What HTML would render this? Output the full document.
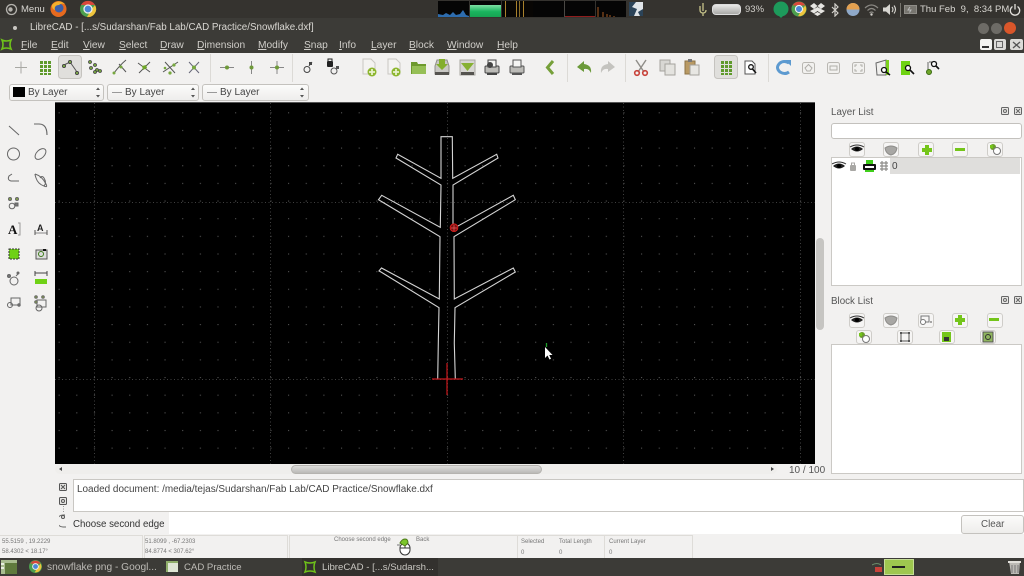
<!DOCTYPE html>
<html><head><meta charset="utf-8"><title>LibreCAD</title>
<style>
html,body{margin:0;padding:0;background:#f2f1f0}
body{width:1024px;height:576px;overflow:hidden;position:relative;background:#f2f1f0;font-family:"Liberation Sans",sans-serif;font-size:10px;color:#3c3c3c;filter:blur(.35px)}
div,span,svg{position:absolute}
.t{white-space:pre;line-height:1}
.menu{top:41px;color:#d0cec9;font-size:10.2px}
.menu u{text-decoration-thickness:1px;text-underline-offset:1px}
.combo{top:84px;height:15px;background:linear-gradient(#fbfbfa,#eeedec);border:1px solid #c4c2be;border-radius:3px;box-sizing:content-box}
.sm{font-size:6px;color:#777}
.pbtn{width:14px;height:13px;background:#f6f5f4;border:1px solid #cfcdc9;border-radius:3px}
</style></head><body>

<!-- top panel -->
<div style="left:0;top:0;width:1024px;height:18px;background:#35332f"></div>
<div style="left:0;top:18px;width:1024px;height:35px;background:#3c3b37"></div>
<svg style="left:5px;top:3px" width="13" height="13" viewBox="0 0 13 13"><circle cx="6.500" cy="6.500" r="5" fill="none" stroke="#b5b3ae" stroke-width="1.300"/><circle cx="5.500" cy="6.500" r="2.200" fill="#b5b3ae"/></svg>
<div class="t" style="left:21px;top:5px;color:#d8d6d1;font-size:9.500px">Menu</div>
<svg style="left:49px;top:0" width="19" height="18" viewBox="0 0 19 18"><circle cx="9.500" cy="9" r="8" fill="#e66a1f"/><circle cx="10" cy="8" r="4.500" fill="#3c5fa8"/><path d="M3 5C6 1 12 0 16 4 13 3 11 4 10 5 7 5 5 7 6 10 3 9 3 7 3 5Z" fill="#f4b02c"/></svg>
<svg style="left:79px;top:0" width="18" height="18" viewBox="0 0 18 18"><circle cx="9" cy="9" r="8" fill="#4c9f4e"/><path d="M2 5A8 8 0 0 1 16 5H9Z" fill="#d9473b"/><path d="M16 5A8 8 0 0 1 8 17L12 10Z" fill="#eec43d"/><circle cx="9" cy="9" r="4" fill="#4b86d6" stroke="#eee" stroke-width="1.300"/></svg>

<!-- system monitor -->
<div style="left:438px;top:1px;width:31px;height:16px;background:#050505"></div>
<svg style="left:438px;top:1px" width="31" height="16"><path d="M0 16V13L5 14 8 12 12 14 15 11 18 14 22 13 25 9 28 14 31 15V16Z" fill="#2d6cae"/></svg>
<div style="left:470px;top:1px;width:31px;height:16px;background:#050505"></div>
<div style="left:470px;top:5px;width:31px;height:12px;background:linear-gradient(#7ee0a3,#19b45e 55%,#17a453)"></div>
<div style="left:502px;top:1px;width:31px;height:16px;background:#080604"></div>
<div style="left:505px;top:1px;width:1px;height:16px;background:#a9812c"></div>
<div style="left:516px;top:1px;width:1px;height:16px;background:#a9812c"></div>
<div style="left:519px;top:1px;width:1px;height:16px;background:#8c6f2a"></div>
<div style="left:523px;top:1px;width:1px;height:16px;background:#a9812c"></div>
<div style="left:533px;top:1px;width:31px;height:16px;background:#050505"></div>
<div style="left:564px;top:1px;width:1px;height:16px;background:#4a4844"></div>
<div style="left:565px;top:1px;width:30px;height:16px;background:#050505"></div>
<div style="left:565px;top:16px;width:30px;height:1px;background:#8f1d1d"></div>
<div style="left:596px;top:1px;width:30px;height:16px;background:#050505"></div>
<svg style="left:596px;top:1px" width="30" height="16"><path d="M2 16V6M7 16V11M11 16V13M14 16V14M18 16V15" stroke="#a85b22" stroke-width="1"/></svg>
<svg style="left:629px;top:2px" width="14" height="14"><rect width="14" height="14" fill="#dfe4e8"/><path d="M0 0H7L3 5 8 7 5 14H0ZM14 7L9 10 11 14H14Z" fill="#2b4358"/></svg>

<!-- indicators -->
<svg style="left:697px;top:2px" width="12" height="15"><path d="M6 1V9M3 4V8Q3 11 6 11 9 11 9 8M6 11V14" stroke="#c7c48a" stroke-width="1.300" fill="none"/></svg>
<div style="left:712px;top:4px;width:29px;height:11px;border-radius:4px;background:linear-gradient(#e8e8e6,#a9a9a6);border:1px solid #ddd;box-sizing:border-box"></div>
<div class="t" style="left:745px;top:5px;color:#d2d0cb;font-size:9.500px">93%</div>
<svg style="left:773px;top:1px" width="16" height="17"><circle cx="8" cy="8" r="7.500" fill="#1d9a5b"/><path d="M5 14L8 17 11 14Z" fill="#1d9a5b"/></svg>
<svg style="left:791px;top:1px" width="16" height="16" viewBox="0 0 18 18"><circle cx="9" cy="9" r="8.500" fill="#4c9f4e"/><path d="M2 5A8 8 0 0 1 16 5H9Z" fill="#d9473b"/><path d="M16 5A8 8 0 0 1 8 17L12 10Z" fill="#eec43d"/><circle cx="9" cy="9" r="4" fill="#4b86d6" stroke="#eee" stroke-width="1.300"/></svg>
<svg style="left:810px;top:3px" width="15" height="13"><path d="M4 0L7.500 3 4 6 0 3ZM11 0L15 3 11 6 7.500 3ZM4 6L7.500 4 11 6 15 8 11 10.500 7.500 8 4 10.500 0 8Z M4 11L7.500 9 11 11 7.500 13Z" fill="#e6e5e1"/></svg>
<svg style="left:830px;top:3px" width="10" height="14"><path d="M2 4L8 10 5 13V1L8 4 2 10" fill="none" stroke="#d2d0cb" stroke-width="1.200"/></svg>
<svg style="left:846px;top:2px" width="14" height="15"><circle cx="7" cy="7.500" r="6.500" fill="#8fa9c9"/><path d="M.5 7.500A6.500 6.500 0 0 1 13.500 7.500Z" fill="#e3a04f"/></svg>
<svg style="left:864px;top:3px" width="15" height="13"><path d="M1 5Q7.500 -1 14 5M3.500 7.500Q7.500 3.500 11.500 7.500M5.500 10Q7.500 8 9.500 10" fill="none" stroke="#8a8883" stroke-width="1.200"/><circle cx="7.500" cy="11.500" r="1.200" fill="#d2d0cb"/></svg>
<svg style="left:882px;top:3px" width="16" height="13"><path d="M1 4.500H4L8 1V12L4 8.500H1Z" fill="#d8d6d1"/><path d="M10 4Q12 6.500 10 9M12 2.500Q15 6.500 12 10.500" fill="none" stroke="#d8d6d1" stroke-width="1.100"/></svg>
<div style="left:900px;top:3px;width:1px;height:14px;background:#77756f"></div>
<svg style="left:904px;top:5px" width="14" height="9"><rect x=".5" y=".5" width="12" height="8" fill="#77756f" stroke="#8f8d88"/><path d="M6 2L4 5H7L5.500 7.500" stroke="#bbb" fill="none"/></svg>
<div class="t" style="left:920px;top:5px;color:#d8d6d1;font-size:9.500px">Thu Feb  9,  8:34 PM</div>
<svg style="left:1009px;top:3px" width="12" height="13"><path d="M3.500 3.500A4.700 4.700 0 1 0 8.500 3.500M6 1V6.500" fill="none" stroke="#e2e0db" stroke-width="1.300"/></svg>

<!-- title bar -->
<div style="left:13px;top:26px;width:4px;height:4px;border-radius:50%;background:#c9c7c2"></div>
<div class="t" style="left:30px;top:23px;color:#d9d7d2;font-size:9.800px">LibreCAD - [...s/Sudarshan/Fab Lab/CAD Practice/Snowflake.dxf]</div>
<div style="left:978px;top:23px;width:11px;height:11px;border-radius:50%;background:#6d6b66"></div>
<div style="left:991px;top:23px;width:11px;height:11px;border-radius:50%;background:#6d6b66"></div>
<div style="left:1004px;top:22px;width:12px;height:12px;border-radius:50%;background:#d9562a"></div>

<!-- menu bar -->
<svg style="left:0;top:37px" width="13" height="15"><path d="M2 3Q6 5 11 3 9 7.500 11 12 6 10 2 12 4 7.500 2 3Z" fill="none" stroke="#6fc21a" stroke-width="1.600"/></svg>
<div class="t menu" style="left:21px"><u>F</u>ile</div>
<div class="t menu" style="left:51px"><u>E</u>dit</div>
<div class="t menu" style="left:83px"><u>V</u>iew</div>
<div class="t menu" style="left:119px"><u>S</u>elect</div>
<div class="t menu" style="left:160px"><u>D</u>raw</div>
<div class="t menu" style="left:197px"><u>D</u>imension</div>
<div class="t menu" style="left:258px"><u>M</u>odify</div>
<div class="t menu" style="left:304px"><u>S</u>nap</div>
<div class="t menu" style="left:339px"><u>I</u>nfo</div>
<div class="t menu" style="left:371px"><u>L</u>ayer</div>
<div class="t menu" style="left:409px"><u>B</u>lock</div>
<div class="t menu" style="left:447px"><u>W</u>indow</div>
<div class="t menu" style="left:497px"><u>H</u>elp</div>
<div style="left:980px;top:39px;width:12px;height:11px;background:#f3f3f1;border-radius:2px"></div>
<div style="left:982px;top:46px;width:7px;height:2px;background:#333"></div>
<div style="left:994px;top:39px;width:12px;height:11px;background:#dcdbd8;border-radius:2px"></div>
<svg style="left:996px;top:41px" width="8" height="7"><rect x=".5" y=".5" width="6" height="6" fill="none" stroke="#666"/></svg>
<div style="left:1010px;top:39px;width:13px;height:11px;background:#dcdbd8;border-radius:2px"></div>
<svg style="left:1012px;top:41px" width="9" height="8"><path d="M1 1L8 7M8 1L1 7" stroke="#555" stroke-width="1.300"/></svg>

<!-- toolbar row 1 -->
<svg style="left:0;top:53px" width="1024" height="30" viewBox="0 53 1024 30" fill="none">
<rect x="58.500" y="55.500" width="23" height="23" rx="3" fill="#e0dfdc" stroke="#c5c3bf"/>
<rect x="714.500" y="55.500" width="23" height="23" rx="3" fill="#e0dfdc" stroke="#c5c3bf"/>
<path d="M15 67.500H27M21 61.500V73.500" stroke="#a8a8a3"/>
<g fill="#5f9a2b"><path d="M40 61h3v3h-3zM44 61h3v3h-3zM48 61h3v3h-3zM40 65h3v3h-3zM44 65h3v3h-3zM48 65h3v3h-3zM40 69h3v3h-3zM44 69h3v3h-3zM48 69h3v3h-3zM40 73h3v2h-3zM44 73h3v2h-3zM48 73h3v2h-3z"/></g>
<path d="M64 65L70 62 77 72" stroke="#555"/><g fill="#8bc34a" stroke="#444"><circle cx="64" cy="66" r="1.500"/><circle cx="70" cy="62" r="1.500"/><circle cx="77" cy="73" r="1.500"/></g>
<g fill="#77a83f" stroke="#444" stroke-width=".8"><circle cx="90" cy="62" r="1.500"/><circle cx="95" cy="65" r="1.500"/><circle cx="91" cy="68" r="1.500"/><circle cx="97" cy="70" r="1.500"/><circle cx="100" cy="71" r="1.500"/><circle cx="95" cy="72" r="1.500"/></g>
<path d="M114 73Q120 65 126 60M119 64L126 72" stroke="#555"/><circle cx="114" cy="73" r="1.500" fill="#77a83f"/><circle cx="121" cy="67" r="1.500" fill="#77a83f"/>
<path d="M138 63L150 72M150 62L139 73" stroke="#555"/><path d="M142 66l4-1 1 3-4 2z" fill="#6fa62a"/>
<path d="M163 72L178 62M165 62L175 73" stroke="#555"/><circle cx="170" cy="73" r="1.600" fill="#77a83f"/><circle cx="174" cy="65" r="1.600" fill="#77a83f"/><circle cx="165" cy="68" r="1.300" fill="#77a83f"/>
<path d="M189 62L199 73M199 62L189 73" stroke="#667"/><circle cx="194" cy="67.500" r="2" fill="#77a83f"/>
<path d="M210.500 54V82M292.500 54V82" stroke="#dcdad6"/>
<path d="M220 67.500H234" stroke="#888"/><circle cx="227" cy="67.500" r="2" fill="#6f9a3a"/>
<path d="M251.500 61V74" stroke="#888"/><circle cx="251.500" cy="67.500" r="2" fill="#6f9a3a"/>
<path d="M270 67.500H284M277 61V74" stroke="#888"/><circle cx="277" cy="67.500" r="2" fill="#6f9a3a"/>
<circle cx="307" cy="69.500" r="3" stroke="#444"/><path d="M309 66L312 62" stroke="#444"/><rect x="309" y="62" width="3" height="3" fill="#444"/>
<rect x="327" y="61" width="6" height="6" rx="1" fill="#222"/><path d="M328 61V59h4v2" stroke="#222"/><circle cx="334" cy="71" r="3" stroke="#555"/><rect x="336" y="66" width="3" height="3" fill="#555"/>
<path d="M363 59H371L375 63V74H363Z" fill="#f4f3f1" stroke="#c9c7c2"/><circle cx="372" cy="72" r="4.500" fill="#8db62f"/><path d="M369 72H375M372 69V75" stroke="#e8f2cc" stroke-width="1.800"/>
<path d="M388 59H396L400 63V74H388Z" fill="#f4f3f1" stroke="#c9c7c2"/><circle cx="396" cy="72" r="4.500" fill="#8db62f"/><path d="M393 72H399M396 69V75" stroke="#e8f2cc" stroke-width="1.800"/>
<path d="M411 62H417L418 64H426V74H411Z" fill="#6e9a2e"/><path d="M412 66H426V74H412Z" fill="#96bf56"/>
<path d="M435 66L437 60H447L449 66V74H435Z" fill="#c9c8c4" stroke="#8f8d88"/><path d="M435 72H449V75H435Z" fill="#55534f"/><path d="M439 59H445V64H448L442 70 436 64H439Z" fill="#83ae2c"/>
<rect x="460" y="60" width="15" height="15" fill="#d7d6d2" stroke="#a8a6a1"/><path d="M461 72H474V75H461Z" fill="#55534f"/><path d="M461 63H474L467.500 71Z" fill="#86b032"/>
<rect x="485" y="66" width="14" height="7" rx="1" fill="#bcbbb7" stroke="#444"/><rect x="488" y="60" width="8" height="7" fill="#f5f5f3" stroke="#444"/><circle cx="490" cy="65" r="3" fill="#444"/><rect x="487" y="73" width="10" height="2" fill="#444"/>
<rect x="510" y="66" width="14" height="7" rx="1" fill="#bcbbb7" stroke="#555"/><rect x="513" y="60" width="8" height="7" fill="#f5f5f3" stroke="#555"/><rect x="512" y="73" width="10" height="2" fill="#555"/>
<path d="M553 61L547.500 67.500 553 74" stroke="#76a03a" stroke-width="3"/>
<path d="M567.500 54V82M625.500 54V82M768.500 54V82" stroke="#dcdad6"/>
<path d="M584 61L577 67 584 72V69Q589 68 591 73 592 65 584 64Z" fill="#6b9a3a"/>
<path d="M608 61L615 67 608 72V69Q603 68 601 73 600 65 608 64Z" fill="#c4c3bf"/>
<path d="M636 60L644 72M646 60L638 72" stroke="#8f8d88" stroke-width="1.400"/><circle cx="637" cy="73" r="2.300" stroke="#c8423a" stroke-width="1.600"/><circle cx="645" cy="73" r="2.300" stroke="#c8423a" stroke-width="1.600"/>
<rect x="660" y="60" width="10" height="11" fill="#d8d7d3" stroke="#a5a39e"/><rect x="665" y="64" width="10" height="11" fill="#e4e3df" stroke="#a5a39e"/>
<rect x="685" y="61" width="10" height="13" fill="#b99a64" stroke="#8d7446"/><rect x="690" y="65" width="9" height="10" fill="#e8e7e3" stroke="#a5a39e"/><rect x="688" y="59" width="4" height="3" fill="#777"/>
<g fill="#5f9a2b"><path d="M721 61h3v3h-3zM725 61h3v3h-3zM729 61h3v3h-3zM721 65h3v3h-3zM725 65h3v3h-3zM729 65h3v3h-3zM721 69h3v3h-3zM725 69h3v3h-3zM729 69h3v3h-3zM721 73h3v2h-3zM725 73h3v2h-3zM729 73h3v2h-3z"/></g>
<path d="M745 61H752L755 64V74H745Z" fill="#fff" stroke="#555"/><circle cx="751" cy="67" r="2.300" stroke="#111" stroke-width="1.300"/><path d="M752.500 69L756 73" stroke="#111" stroke-width="1.600"/>
<path d="M789 63Q784 60 780 63 775 67.500 780 72 785 75 789 72" stroke="#5d9ad0" stroke-width="3"/><path d="M785 60H791V66Z" fill="#5d9ad0"/>
<rect x="802.500" y="62.500" width="12" height="11" rx="2" fill="#f2f1ef" stroke="#b9b7b2"/><path d="M805 68L808.500 64.500 812 68 810 71H807Z" stroke="#b0aeaa"/>
<rect x="827.500" y="62.500" width="12" height="11" rx="2" fill="#f2f1ef" stroke="#b9b7b2"/><rect x="830" y="66" width="7" height="4" stroke="#b0aeaa"/>
<rect x="852.500" y="62.500" width="12" height="11" rx="2" fill="#f2f1ef" stroke="#b9b7b2"/><path d="M855 67V65H857M860 65H862V67M862 69V71H860M857 71H855V69" stroke="#b0aeaa"/>
<path d="M876 63L886 60V75H877Z" fill="#f0efed" stroke="#666"/><path d="M886 60H889V75H886Z" fill="#7bd11d"/><circle cx="884" cy="70" r="2.500" fill="#fff" stroke="#111" stroke-width="1.300"/><path d="M886 72L890 75" stroke="#111" stroke-width="1.600"/>
<rect x="901" y="61" width="9" height="14" fill="#6fd312"/><circle cx="908" cy="68" r="2.500" fill="#fff" stroke="#111" stroke-width="1.300"/><path d="M910 70L914 74" stroke="#111" stroke-width="1.600"/>
<path d="M929 62H936V66M928 62V70" stroke="#666"/><circle cx="929" cy="72" r="2.500" fill="#6fa62a" stroke="#3a6a10"/><circle cx="934" cy="64" r="2.500" fill="#fff" stroke="#111" stroke-width="1.300"/><path d="M936 66L939 69" stroke="#111" stroke-width="1.600"/>
</svg>

<!-- combos row -->
<div class="combo" style="left:9px;width:93px"></div>
<div style="left:13px;top:87px;width:12px;height:10px;background:#000"></div>
<div class="t" style="left:28px;top:88px;font-size:10px;color:#444">By Layer</div>
<div class="combo" style="left:107px;width:90px"></div>
<div style="left:112px;top:92px;width:10px;height:1px;background:#999"></div>
<div class="t" style="left:125px;top:88px;font-size:10px;color:#444">By Layer</div>
<div class="combo" style="left:202px;width:105px"></div>
<div style="left:207px;top:92px;width:10px;height:1px;background:#999"></div>
<div class="t" style="left:220px;top:88px;font-size:10px;color:#444">By Layer</div>
<svg style="left:0;top:84px" width="310" height="17" fill="#555"><path d="M96 6L98 3.500 100 6ZM96 11L98 13.500 100 11ZM191 6L193 3.500 195 6ZM191 11L193 13.500 195 11ZM300 6L302 3.500 304 6ZM300 11L302 13.500 304 11Z"/></svg>

<!-- canvas -->
<div style="left:55px;top:102px;width:760px;height:362px;background:#000;border-top:1px solid #555;box-sizing:border-box"></div>
<svg style="left:55px;top:103px" width="760" height="361" viewBox="55 103 760 361">
<defs><pattern id="dots" x="5.650" y="6.350" width="17.650" height="17.650" patternUnits="userSpaceOnUse"><rect width="1.100" height="1.100" fill="#555"/></pattern></defs>
<rect x="55" y="103" width="760" height="361" fill="url(#dots)"/>
<path d="M94.500 103V464M270.500 103V464M447.500 103V464M623.500 103V464M800.500 103V464M55 202.500H815M55 379.500H815" stroke="#404040" stroke-width="1" stroke-dasharray="1 2.500"/>
<g fill="none" stroke="#d4d4d4" stroke-width="1.100">
<path d="M437.700 379L438.300 343.300 439 307.700 381 272 379 271 381.500 268 439.300 299 440 236.700 378.500 199.700 381.700 195.300 440.300 227.300 441 185 396 158 397.700 154.300 441 178.300V136.700H452.300L452.700 178.300 496.700 154.300 498 158 453 185V225"/>
<path d="M456.700 226.700L513.300 195.300 515.300 199.700 454 236.700 454.300 299 513.300 268 515.300 272 455 307.700 454.300 343.300 455.300 379"/>
</g>
<circle cx="454" cy="227.700" r="3.800" fill="#7a1010" stroke="#d81e1e"/><path d="M451 228H457M454 225V231" stroke="#f06060" stroke-width=".7"/>
<path d="M432 379H463M447 363V395" stroke="#c9181c" stroke-width="1.200"/>
<path d="M546.500 343V347" stroke="#1f9d2a" stroke-width="1.300"/>
<path d="M545 347V358L547.500 355.500 549.500 359.500 551 358.800 549.200 355H552.500Z" fill="#fff"/>
</svg>

<!-- canvas scrollbars -->
<div style="left:815px;top:102px;width:11px;height:372px;background:#f2f1f0"></div>
<div style="left:816px;top:238px;width:8px;height:92px;background:#c6c5c2;border-radius:4px"></div>
<div style="left:55px;top:464px;width:722px;height:10px;background:#efeeec;border-radius:5px"></div>
<div style="left:291px;top:465px;width:251px;height:9px;background:linear-gradient(#dedddb,#bbbab7);border:1px solid #b5b3af;border-radius:5px;box-sizing:border-box"></div>
<div style="left:59px;top:467px;width:0;height:0;border:2.500px solid transparent;border-right:3px solid #444;border-left:0"></div>
<div style="left:771px;top:467px;width:0;height:0;border:2.500px solid transparent;border-left:3px solid #444;border-right:0"></div>
<div class="t" style="left:789px;top:466px;font-size:10px;color:#555">10 / 100</div>

<!-- layer list -->
<div class="t" style="left:831px;top:108px;font-size:9.800px;color:#555">Layer List</div>
<svg style="left:1000px;top:107px" width="24" height="10" fill="none" stroke="#666"><rect x="1.500" y=".5" width="7" height="7" rx="1" fill="#e8e7e5"/><circle cx="5" cy="4" r="1.500"/><rect x="14.500" y=".5" width="7" height="7" rx="1" fill="#e8e7e5"/><path d="M16 2L20 6M20 2L16 6"/></svg>
<div style="left:831px;top:123px;width:189px;height:14px;background:#fff;border:1px solid #c3c1bd;border-radius:3px"></div>
<div class="pbtn" style="left:849px;top:142px"></div>
<div class="pbtn" style="left:883px;top:142px"></div>
<div class="pbtn" style="left:918px;top:142px"></div>
<div class="pbtn" style="left:952px;top:142px"></div>
<div class="pbtn" style="left:987px;top:142px"></div>
<svg style="left:830px;top:140px" width="194" height="35" viewBox="830 140 194 35">
<path d="M851 149Q857 144 863 149 857 154 851 149Z" fill="#222"/><circle cx="857" cy="149" r="2" fill="#000"/><path d="M850 147Q857 143 864 147" stroke="#333" fill="none"/>
<path d="M885 148Q891 144 897 148 896 154 891 155 886 154 885 148Z" fill="#a8a7a4" stroke="#8e8d8a"/>
<path d="M922 148h3v-3h4v3h3v4h-3v3h-4v-3h-3Z" fill="#74c51a"/>
<rect x="955" y="148" width="10" height="3" fill="#74c51a"/>
<circle cx="993" cy="147" r="3" fill="#6aa028"/><rect x="990" y="145" width="3" height="3" fill="#74c51a"/><circle cx="997" cy="151" r="3.500" fill="#fff" stroke="#777"/>
</svg>
<div style="left:831px;top:157px;width:189px;height:127px;background:#fff;border:1px solid #cbc9c5"></div>
<div style="left:890px;top:158px;width:130px;height:16px;background:#dfdedc"></div>
<svg style="left:832px;top:158px" width="60" height="16" viewBox="0 0 60 16"><path d="M1 8Q7 3 13 8 7 13 1 8Z" fill="#222"/><circle cx="7" cy="8" r="2" fill="#000"/><path d="M0 6Q7 2 14 6" stroke="#333" fill="none"/>
<rect x="18" y="7" width="6" height="6" rx="1" fill="#a8a7a4"/><path d="M19.500 7V5h3v2" stroke="#a8a7a4" fill="none"/>
<rect x="31" y="6" width="13" height="6" rx="1" fill="#111"/><rect x="34" y="2" width="7" height="4" fill="#3fce1a"/><rect x="33" y="8" width="9" height="2" fill="#fff"/><rect x="33" y="12" width="9" height="2" fill="#3fce1a"/>
<path d="M48 5h8M48 8h8M48 11h8M50 3v10M54 3v10" stroke="#8d8c89" stroke-width="1.200"/></svg>
<div class="t" style="left:892px;top:162px;font-size:10px;color:#444">0</div>

<!-- block list -->
<div class="t" style="left:831px;top:297px;font-size:9.800px;color:#555">Block List</div>
<svg style="left:1000px;top:296px" width="24" height="10" fill="none" stroke="#666"><rect x="1.500" y=".5" width="7" height="7" rx="1" fill="#e8e7e5"/><circle cx="5" cy="4" r="1.500"/><rect x="14.500" y=".5" width="7" height="7" rx="1" fill="#e8e7e5"/><path d="M16 2L20 6M20 2L16 6"/></svg>
<div class="pbtn" style="left:849px;top:313px"></div>
<div class="pbtn" style="left:883px;top:313px"></div>
<div class="pbtn" style="left:918px;top:313px"></div>
<div class="pbtn" style="left:952px;top:313px"></div>
<div class="pbtn" style="left:987px;top:313px"></div>
<div class="pbtn" style="left:856px;top:330px;height:12px"></div>
<div class="pbtn" style="left:897px;top:330px;height:12px"></div>
<div class="pbtn" style="left:939px;top:330px;height:12px"></div>
<div class="pbtn" style="left:980px;top:330px;height:12px"></div>
<svg style="left:830px;top:310px" width="194" height="36" viewBox="830 310 194 36">
<path d="M851 320Q857 315 863 320 857 325 851 320Z" fill="#222"/><circle cx="857" cy="320" r="2" fill="#000"/><path d="M850 318Q857 314 864 318" stroke="#333" fill="none"/>
<path d="M885 318Q891 314 897 318 896 324 891 325 886 324 885 318Z" fill="#a8a7a4" stroke="#8e8d8a"/>
<rect x="921" y="316" width="8" height="6" fill="none" stroke="#777"/><circle cx="923" cy="322" r="2.500" fill="#fff" stroke="#777"/><path d="M930 322h2" stroke="#555"/>
<path d="M955 318h3v-3h4v3h3v4h-3v3h-4v-3h-3Z" fill="#74c51a"/>
<rect x="989" y="318" width="10" height="3" fill="#74c51a"/>
<circle cx="862" cy="335" r="3" fill="#6aa028"/><rect x="859" y="333" width="3" height="3" fill="#74c51a"/><circle cx="866" cy="339" r="3.500" fill="#fff" stroke="#777"/>
<path d="M901 333H909V341H901Z" fill="none" stroke="#555"/><rect x="900" y="332" width="2" height="2" fill="#555"/><rect x="908" y="332" width="2" height="2" fill="#555"/><rect x="900" y="340" width="2" height="2" fill="#555"/><rect x="908" y="340" width="2" height="2" fill="#555"/>
<rect x="942" y="332" width="9" height="10" fill="#74c51a"/><rect x="944" y="337" width="5" height="4" fill="#333"/>
<rect x="983" y="332" width="10" height="10" fill="#8fb55e" stroke="#555"/><circle cx="988" cy="337" r="2.500" fill="none" stroke="#333"/>
</svg>
<div style="left:831px;top:344px;width:189px;height:128px;background:#fff;border:1px solid #cbc9c5"></div>

<!-- command area -->
<svg style="left:59px;top:483px" width="10" height="45" fill="none" stroke="#555"><rect x=".5" y=".5" width="7" height="7" rx="1" fill="#e6e5e3"/><path d="M2 2L6 6M6 2L2 6"/><rect x=".5" y="14.500" width="7" height="7" rx="1" fill="#e6e5e3"/><circle cx="4" cy="18" r="1.500"/><path d="M6 32H4A3 3 0 0 0 4 44H7" stroke="#666"/><circle cx="4" cy="34" r="1.500"/><path d="M4.500 23V30" stroke-dasharray="1 1.500" stroke="#999"/></svg>
<div style="left:73px;top:479px;width:951px;height:33px;background:#fff;border:1px solid #c9c7c3;box-sizing:border-box"></div>
<div class="t" style="left:77px;top:485px;font-size:9.950px;color:#444">Loaded document: /media/tejas/Sudarshan/Fab Lab/CAD Practice/Snowflake.dxf</div>
<div style="left:169px;top:512px;width:855px;height:22px;background:#fff"></div>
<div class="t" style="left:73px;top:520px;font-size:9.700px;color:#333">Choose second edge</div>
<div style="left:961px;top:515px;width:61px;height:17px;background:linear-gradient(#fbfbfa,#eeedeb);border:1px solid #c4c2be;border-radius:3px"></div>
<div class="t" style="left:981px;top:520px;font-size:9.800px;color:#555">Clear</div>

<!-- status bar -->
<div style="left:0;top:535px;width:142px;height:22px;border:1px solid #dedcd8;border-left:0"></div>
<div style="left:144px;top:535px;width:142px;height:22px;border:1px solid #dedcd8"></div>
<div style="left:289px;top:535px;width:227px;height:22px;border:1px solid #dedcd8"></div>
<div style="left:518px;top:535px;width:86px;height:22px;border:1px solid #dedcd8;border-left:0"></div>
<div style="left:605px;top:535px;width:87px;height:22px;border:1px solid #dedcd8;border-left:0"></div>
<div class="t sm" style="left:2px;top:539px">55.5159 , 19.2229</div>
<div class="t sm" style="left:2px;top:549px">58.4302 &lt; 18.17°</div>
<div class="t sm" style="left:145px;top:539px">51.8099 , -67.2303</div>
<div class="t sm" style="left:145px;top:549px">84.8774 &lt; 307.62°</div>
<div class="t sm" style="left:334px;top:537px">Choose second edge</div>
<svg style="left:397px;top:538px" width="14" height="18" fill="none"><rect x="3" y="5" width="10" height="12" rx="5" fill="#fff" stroke="#333"/><path d="M3 10H13M8 5V10" stroke="#333"/><path d="M3 5Q5 1 8 1 11 1 11 5L8 8Z" fill="#7bc62a" stroke="#4d7a18"/><path d="M0 7H3" stroke="#777"/></svg>
<div class="t sm" style="left:416px;top:537px">Back</div>
<div class="t sm" style="left:521px;top:539px">Selected</div>
<div class="t sm" style="left:559px;top:539px">Total Length</div>
<div class="t sm" style="left:609px;top:539px">Current Layer</div>
<div class="t sm" style="left:521px;top:550px">0</div>
<div class="t sm" style="left:559px;top:550px">0</div>
<div class="t sm" style="left:609px;top:550px">0</div>

<!-- left tool column -->
<svg style="left:0;top:103px" width="55" height="210" viewBox="0 103 55 210" fill="none" stroke="#666">
<path d="M9 126L19 135"/><path d="M34 124H39Q47 124 47 135" stroke-width="1.100"/>
<circle cx="13.500" cy="154" r="6"/><ellipse cx="40.500" cy="154" rx="6.500" ry="4" transform="rotate(-45 40.500 154)"/>
<path d="M19 181H11Q7 180 9 176L12 174"/><path d="M35 174Q42 176 46 184 48 188 44 186 38 184 36 178 35 175 35 174M40 178Q42 175 44 178 47 183 44 186"/>
<circle cx="10" cy="199" r="1.500" fill="#87a54c"/><circle cx="17" cy="199" r="1.500" fill="#87a54c"/><circle cx="12" cy="206" r="2.800"/><rect x="15" y="203" width="3" height="3" fill="#777"/>
<text x="8" y="234" font-family="Liberation Serif,serif" font-size="13" font-weight="700" fill="#111" stroke="none">A</text><path d="M18 223H20V235H18" stroke="#999"/>
<text x="37" y="231" font-family="Liberation Sans,sans-serif" font-size="9" font-weight="700" fill="#222" stroke="none">A</text><path d="M35 233H47" stroke="#888"/><path d="M35 230V235M47 230V235" stroke="#555"/>
<rect x="9" y="249" width="10" height="10" fill="#6fd115" stroke="#333" stroke-dasharray="2 1"/>
<rect x="36" y="250" width="11" height="9" fill="#ddd" stroke="#555"/><circle cx="41" cy="254" r="2.500" stroke="#3d7a1a"/><rect x="43" y="249" width="3" height="2" fill="#111" stroke="none"/>
<circle cx="14" cy="281" r="4"/><circle cx="9" cy="276" r="1.500" fill="#777"/><path d="M16 276L18 274"/><circle cx="18" cy="273" r="1" fill="#777"/>
<rect x="35" y="279" width="12" height="5" fill="#6fd115" stroke="none"/><path d="M35 273H47M35 271V276M47 271V276" stroke="#444"/>
<rect x="11" y="298" width="9" height="7"/><circle cx="10" cy="305" r="2.500"/><circle cx="19" cy="305" r="1.200" fill="#777"/>
<rect x="37" y="300" width="9" height="7"/><circle cx="39" cy="308" r="3"/><circle cx="36" cy="297" r="1.300" fill="#87a54c"/><circle cx="43" cy="297" r="1.300" fill="#87a54c"/><circle cx="36" cy="302" r="1.300" fill="#87a54c"/>
</svg>

<!-- task bar -->
<div style="left:0;top:558px;width:1024px;height:18px;background:#3c3b37"></div>
<div style="left:302px;top:558px;width:136px;height:18px;background:#33312e"></div>
<svg style="left:1px;top:560px" width="17" height="15"><rect width="16" height="14" fill="#a9bd90"/><rect x="4" y="3" width="12" height="11" fill="#5f7a3d"/><rect y="3" width="3" height="2" fill="#e8efe0"/><rect y="7" width="3" height="2" fill="#e8efe0"/></svg>
<svg style="left:29px;top:560px" width="13" height="13" viewBox="0 0 18 18"><circle cx="9" cy="9" r="9" fill="#4c9f4e"/><path d="M2 5A8 8 0 0 1 16 5H9Z" fill="#d9473b"/><path d="M16 5A8 8 0 0 1 8 17L12 10Z" fill="#eec43d"/><circle cx="9" cy="9" r="4" fill="#4b86d6" stroke="#eee" stroke-width="1.300"/></svg>
<div class="t" style="left:47px;top:563px;color:#bdbbb6;font-size:10.200px">snowflake png - Googl...</div>
<svg style="left:166px;top:560px" width="13" height="13"><path d="M0 1H12V12H0Z" fill="#8fae6a"/><path d="M2 3H12V12H2Z" fill="#dfe6d5"/></svg>
<div class="t" style="left:184px;top:563px;color:#bdbbb6;font-size:9.600px">CAD Practice</div>
<svg style="left:303px;top:560px" width="14" height="14"><path d="M2 2Q7 4 12 2 10 7 12 12 7 10 2 12 4 7 2 2Z" fill="none" stroke="#6fc21a" stroke-width="1.500"/></svg>
<div class="t" style="left:322px;top:563px;color:#c9c7c2;font-size:9.600px">LibreCAD - [...s/Sudarsh...</div>
<svg style="left:872px;top:562px" width="11" height="11"><path d="M0 3Q5 0 9 3" stroke="#6a8d6a" fill="none"/><rect x="3" y="5" width="7" height="5" fill="#c8423a"/></svg>
<div style="left:884px;top:559px;width:30px;height:16px;background:#9ec74f;border:1px solid #c5dd96;box-sizing:border-box"></div>
<div style="left:892px;top:566px;width:13px;height:2px;background:#222"></div>
<svg style="left:1007px;top:559px" width="16" height="17"><path d="M2 2H13L12 15H4Z" fill="#bcbab5"/><path d="M1 2H14V4H1Z" fill="#e2e0db"/><path d="M5 6V14M8 6V14M11 6V14" stroke="#777"/></svg>
</body></html>
